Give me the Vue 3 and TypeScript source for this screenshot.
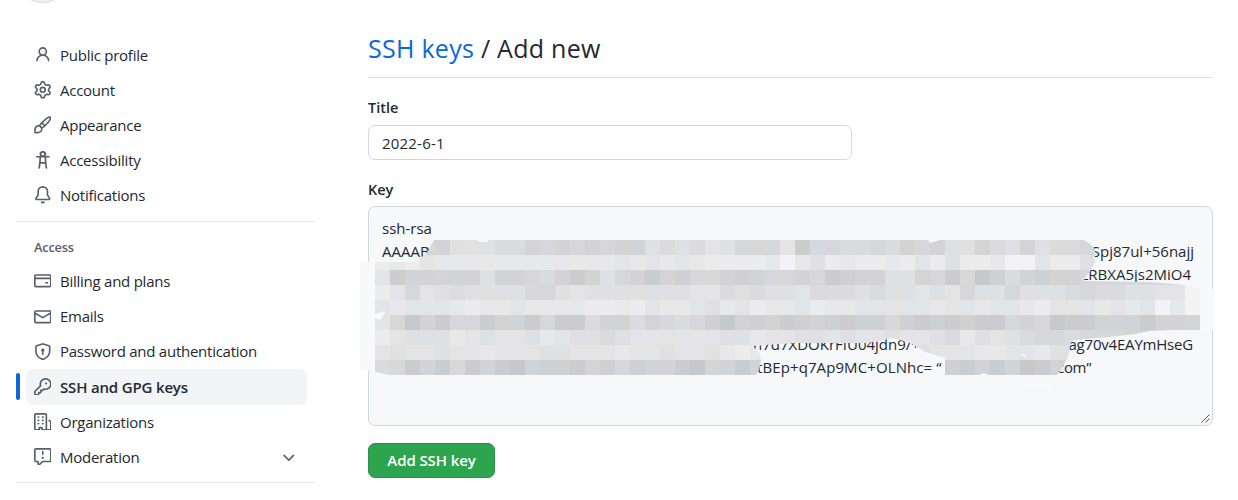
<script setup lang="ts">
interface NavItem {
  label: string
  icon: string
  active?: boolean
  expandable?: boolean
}

const icons: Record<string, string> = {
  person: 'M10.5 5a2.5 2.5 0 11-5 0 2.5 2.5 0 015 0zm.061 3.073a4 4 0 10-5.123 0 6.004 6.004 0 00-3.431 5.142.75.75 0 001.498.07 4.5 4.5 0 018.99 0 .75.75 0 101.498-.07 6.005 6.005 0 00-3.432-5.142z',
  gear: 'M7.429 1.525a6.593 6.593 0 011.142 0c.036.003.108.036.137.146l.289 1.105c.147.56.55.967.997 1.189.174.086.341.183.501.29.417.278.97.423 1.53.27l1.102-.303c.11-.03.175.016.195.046.219.31.41.641.573.989.014.031.022.11-.059.19l-.815.806c-.411.406-.562.957-.53 1.456a4.588 4.588 0 010 .582c-.032.499.119 1.05.53 1.456l.815.806c.08.08.073.159.059.19a6.494 6.494 0 01-.573.99c-.02.029-.086.074-.195.045l-1.103-.303c-.559-.153-1.112-.008-1.529.27-.16.107-.327.204-.5.29-.449.222-.851.628-.998 1.189l-.289 1.105c-.029.11-.101.143-.137.146a6.613 6.613 0 01-1.142 0c-.036-.003-.108-.037-.137-.146l-.289-1.105c-.147-.56-.55-.967-.997-1.189a4.502 4.502 0 01-.501-.29c-.417-.278-.97-.423-1.53-.27l-1.102.303c-.11.03-.175-.016-.195-.046a6.492 6.492 0 01-.573-.989c-.014-.031-.022-.11.059-.19l.815-.806c.411-.406.562-.957.53-1.456a4.587 4.587 0 010-.582c.032-.499-.119-1.05-.53-1.456l-.815-.806c-.08-.08-.073-.159-.059-.19a6.44 6.44 0 01.573-.99c.02-.029.086-.075.195-.045l1.103.303c.559.153 1.112.008 1.529-.27.16-.107.327-.204.5-.29.449-.222.851-.628.998-1.189l.289-1.105c.029-.11.101-.143.137-.146zM8 0c-.236 0-.47.01-.701.03-.743.065-1.29.615-1.458 1.261l-.29 1.106c-.017.066-.078.158-.211.224a5.994 5.994 0 00-.668.386c-.123.082-.233.09-.3.071L3.27 2.776c-.644-.177-1.392.02-1.82.63a7.977 7.977 0 00-.704 1.217c-.315.675-.111 1.422.363 1.891l.815.806c.05.048.098.147.088.294a6.084 6.084 0 000 .772c.01.147-.038.246-.088.294l-.815.806c-.474.469-.678 1.216-.363 1.891.2.428.436.835.704 1.218.428.609 1.176.806 1.82.63l1.103-.303c.066-.019.176-.011.299.071.213.143.436.272.668.386.133.066.194.158.212.224l.289 1.106c.169.646.715 1.196 1.458 1.26a8.094 8.094 0 001.402 0c.743-.064 1.29-.614 1.458-1.26l.29-1.106c.017-.066.078-.158.211-.224a5.98 5.98 0 00.668-.386c.123-.082.233-.09.3-.071l1.102.302c.644.177 1.392-.02 1.82-.63.268-.382.505-.789.704-1.217.315-.675.111-1.422-.364-1.891l-.814-.806c-.05-.048-.098-.147-.088-.294a6.1 6.1 0 000-.772c-.01-.147.039-.246.088-.294l.814-.806c.475-.469.679-1.216.364-1.891a7.992 7.992 0 00-.704-1.218c-.428-.609-1.176-.806-1.82-.63l-1.103.303c-.066.019-.176.011-.299-.071a5.991 5.991 0 00-.668-.386c-.133-.066-.194-.158-.212-.224L10.16 1.29C9.99.645 9.444.095 8.701.031A8.094 8.094 0 008 0zm1.5 8a1.5 1.5 0 11-3 0 1.5 1.5 0 013 0zM11 8a3 3 0 11-6 0 3 3 0 016 0z',
  brush: 'M11.134 1.535C9.722 2.562 8.16 4.057 6.889 5.312 5.8 6.387 5.041 7.401 4.575 8.294a3.745 3.745 0 00-3.227 1.054c-.43.431-.69 1.066-.86 1.657a11.982 11.982 0 00-.358 1.914A21.263 21.263 0 000 15.203v.054l.75-.007-.007.75h.054a14.404 14.404 0 00.654-.012 21.243 21.243 0 001.63-.118c.62-.07 1.3-.18 1.914-.357.592-.17 1.226-.43 1.657-.861a3.745 3.745 0 001.055-3.217c.908-.461 1.942-1.216 3.04-2.3 1.279-1.262 2.764-2.825 3.775-4.249.501-.706.923-1.428 1.125-2.096.2-.659.235-1.469-.368-2.07-.606-.607-1.42-.55-2.069-.34-.66.213-1.376.646-2.076 1.155zm-3.95 8.48a3.76 3.76 0 00-1.19-1.192 9.758 9.758 0 011.161-1.607l1.658 1.658a9.853 9.853 0 01-1.63 1.142zM12.016 2.749c-1.224.89-2.605 2.189-3.822 3.384l1.718 1.718c1.21-1.205 2.51-2.597 3.387-3.833.47-.662.78-1.227.912-1.662.134-.444.032-.551.009-.575h-.001V1.78c-.014-.014-.112-.113-.548.027-.432.14-.995.462-1.655.942zM1.62 13.089a19.56 19.56 0 00-.104 1.395 19.55 19.55 0 001.396-.104 10.528 10.528 0 001.668-.309c.526-.151.856-.325 1.011-.48a2.25 2.25 0 00-3.182-3.182c-.155.155-.329.485-.48 1.01a10.515 10.515 0 00-.309 1.67z',
  accessibility: 'M8 0a2.75 2.75 0 012.35 4.5H13.6a.75.75 0 010 1.5h-2.5l.2 3.4.7 5.8a.75.75 0 01-1.5.2L10 11.5H6l-.5 3.9a.75.75 0 01-1.5-.2l.7-5.8.2-3.4H2.4a.75.75 0 010-1.5h3.25A2.75 2.75 0 018 0zm0 1.5A1.25 1.25 0 108 4a1.25 1.25 0 000-2.5zM6.4 6l-.2 4h3.6l-.2-4z',
  bell: 'M8 16a2 2 0 001.985-1.75c.017-.137-.097-.25-.235-.25h-3.5c-.138 0-.252.113-.235.25A2 2 0 008 16zM8 1.5A3.5 3.5 0 004.5 5v2.947c0 .346-.102.683-.294.97l-1.703 2.556a.018.018 0 00-.003.01l.001.006c0 .002.002.004.004.006a.017.017 0 00.006.004l.007.001h10.964l.007-.001a.016.016 0 00.006-.004.016.016 0 00.004-.006l.001-.007a.017.017 0 00-.003-.01l-1.703-2.554a1.75 1.75 0 01-.294-.97V5A3.5 3.5 0 008 1.5zM3 5a5 5 0 0110 0v2.947c0 .05.015.098.042.139l1.703 2.555A1.518 1.518 0 0113.482 13H2.518a1.518 1.518 0 01-1.263-2.36l1.703-2.554A.25.25 0 003 7.947V5z',
  card: 'M10.75 9a.75.75 0 000 1.5h1.5a.75.75 0 000-1.5h-1.5zM0 3.75C0 2.784.784 2 1.75 2h12.5c.966 0 1.75.784 1.75 1.75v8.5A1.75 1.75 0 0114.25 14H1.75A1.75 1.75 0 010 12.25v-8.5zm14.5 0V5h-13V3.75a.25.25 0 01.25-.25h12.5a.25.25 0 01.25.25zm0 2.75h-13v5.75c0 .138.112.25.25.25h12.5a.25.25 0 00.25-.25V6.5z',
  mail: 'M1.75 2A1.75 1.75 0 000 3.75v8.5C0 13.216.784 14 1.75 14h12.5A1.75 1.75 0 0016 12.25v-8.5A1.75 1.75 0 0014.25 2H1.75zM14.5 4.07v-.32a.25.25 0 00-.25-.25H1.75a.25.25 0 00-.25.25v.32L8 7.88l6.5-3.81zm-13 1.74v6.441c0 .138.112.25.25.25h12.5a.25.25 0 00.25-.25V5.809L8.38 9.397a.75.75 0 01-.76 0L1.5 5.809z',
  shield: 'M7.467.133a1.75 1.75 0 011.066 0l5.25 1.68A1.75 1.75 0 0115 3.48V7c0 1.566-.32 3.182-1.303 4.682-.983 1.498-2.585 2.813-5.032 3.855a1.7 1.7 0 01-1.33 0c-2.447-1.042-4.049-2.357-5.032-3.855C1.32 10.182 1 8.566 1 7V3.48a1.75 1.75 0 011.217-1.667l5.25-1.68zm.61 1.429a.25.25 0 00-.153 0l-5.25 1.68a.25.25 0 00-.174.238V7c0 1.358.275 2.666 1.057 3.86.784 1.194 2.121 2.34 4.366 3.297a.2.2 0 00.154 0c2.245-.956 3.582-2.104 4.366-3.298C13.225 9.666 13.5 8.36 13.5 7V3.48a.25.25 0 00-.174-.237l-5.25-1.68zM9.5 6.5a1.5 1.5 0 01-.75 1.3v2.45a.75.75 0 01-1.5 0V7.8A1.5 1.5 0 119.5 6.5z',
  key: 'M6.5 5.5a4 4 0 112.731 3.795.75.75 0 00-.768.18L7.44 10.5H6.25a.75.75 0 00-.75.75v1.19l-.06.06H4.25a.75.75 0 00-.75.75v1.19l-.06.06H1.75a.25.25 0 01-.25-.25v-1.69l5.024-5.023a.75.75 0 00.181-.768A3.995 3.995 0 016.5 5.5zm4-5.5a5.5 5.5 0 00-5.348 6.788L.22 11.72a.75.75 0 00-.22.53v2C0 15.216.784 16 1.75 16h2a.75.75 0 00.53-.22l.5-.5a.75.75 0 00.22-.53V14h.75a.75.75 0 00.53-.22l.5-.5a.75.75 0 00.22-.53V12h.75a.75.75 0 00.53-.22l.932-.932A5.5 5.5 0 1010.5 0zm.5 6a1 1 0 100-2 1 1 0 000 2z',
  organization: 'M1.5 14.25c0 .138.112.25.25.25H4v-1.25a.75.75 0 01.75-.75h2.5a.75.75 0 01.75.75v1.25h2.25a.25.25 0 00.25-.25V1.75a.25.25 0 00-.25-.25h-8.5a.25.25 0 00-.25.25v12.5zM1.75 16A1.75 1.75 0 010 14.25V1.75C0 .784.784 0 1.75 0h8.5C11.216 0 12 .784 12 1.75v12.5c0 .085-.006.168-.018.25h2.268a.25.25 0 00.25-.25V8.285a.25.25 0 00-.111-.208l-1.055-.703a.75.75 0 11.832-1.248l1.055.703c.487.325.779.871.779 1.456v5.965A1.75 1.75 0 0114.25 16h-3.5a.75.75 0 01-.197-.026c-.099.017-.2.026-.303.026h-3a.75.75 0 01-.75-.75V14h-1v1.25a.75.75 0 01-.75.75h-3zM3.75 3h.5a.75.75 0 010 1.5h-.5a.75.75 0 010-1.5zM3.75 6h.5a.75.75 0 010 1.5h-.5a.75.75 0 010-1.5zM3.75 9h.5a.75.75 0 010 1.5h-.5a.75.75 0 010-1.5zM7.75 3h.5a.75.75 0 010 1.5h-.5a.75.75 0 010-1.5zM7.75 6h.5a.75.75 0 010 1.5h-.5a.75.75 0 010-1.5zM7.75 9h.5a.75.75 0 010 1.5h-.5a.75.75 0 010-1.5z',
  report: 'M0 1.75C0 .784.784 0 1.75 0h12.5C15.216 0 16 .784 16 1.75v9.5A1.75 1.75 0 0114.25 13H8.06l-2.573 2.573A1.457 1.457 0 013 14.543V13H1.75A1.75 1.75 0 010 11.25V1.75zm1.75-.25a.25.25 0 00-.25.25v9.5c0 .138.112.25.25.25h2a.75.75 0 01.75.75v2.19l2.72-2.72a.75.75 0 01.53-.22h6.5a.25.25 0 00.25-.25v-9.5a.25.25 0 00-.25-.25H1.75zM9 9a1 1 0 11-2 0 1 1 0 012 0zm-.25-5.75a.75.75 0 00-1.5 0v2.5a.75.75 0 001.5 0v-2.5z',
}

const general: NavItem[] = [
  { label: 'Public profile', icon: 'person' },
  { label: 'Account', icon: 'gear' },
  { label: 'Appearance', icon: 'brush' },
  { label: 'Accessibility', icon: 'accessibility' },
  { label: 'Notifications', icon: 'bell' },
]

const access: NavItem[] = [
  { label: 'Billing and plans', icon: 'card' },
  { label: 'Emails', icon: 'mail' },
  { label: 'Password and authentication', icon: 'shield' },
  { label: 'SSH and GPG keys', icon: 'key', active: true },
  { label: 'Organizations', icon: 'organization' },
  { label: 'Moderation', icon: 'report', expandable: true },
]

// Redaction mosaic: each cell is a lightness letter (a = lightest) and a tint letter.
const cell = 15
const mosaicRows: string[] = [
  'gn gn gn gn hp en eg eb fb fb hg gp hn gp hb gp hn hb eb fn eb fp dp eb gb gn gv dn jn gv gp fb fb gb fn hn gp hp eb en hg fp ep hg ep fn fn gb',
  'bn cn bn dn cb cb cn cn cb cb cb cb cp cn cn cb db cn dp cp db cn bn bp bp bn cb ap cn eb bp cb bp bn cb bn db bp eb bn bn cn ap ap db bn bn eb',
  'db jg hb hp hg hb hp eb hb hp gn fb hp jn hn eb gn hp jb hw ib gn gg hp ip hb gp gn hp gp jp in hp hp eb en hg gp jp gg kp ib fb hb ib hn hn gb gb gb gp gp gp gp',
  'bn dp gb dp ep fg ep en ep eb gg gp en dn ep eb en en eb ep en dp dn fp en fp en eb db fp fb fn eb fb en eb db eb dn gp eb eb gb ep eb eb fb gb fp fb eb eb dp dn an',
  'dp cp db db db cb bp cn cn db cn cn cn cb bp bp cg bp db cn cn db ep cb dn bp cn cb db bb cn cn db db dn db db cn dn db cn db db cp bp dn dn db cn dp cb db ap cb an',
  'dn gn kv hn jp gp gb jb hn hb jn gb jn jb fp hn hn fb hw gv fb gp ib kb hp ib hn jv in hn ib jp ib ib gw ib jp ib jg in jp jp gb hp gn kg jb jp hp hb hb jn hn hp hg',
  'bn dn eb eb eb cn dn eb dn dn eb cb db ep ep fn eb dp dp dn db dn dp ep eb cp dn dn ep ep db eb db dp en dp db ep fb cn eb dn eb fb gb gb fb gp gb gb hn hp gp gb gb',
  'dn eb dn dn eb dn dp cp dp dp dn eb eb dn dn dn cn dn dn en dp dp en cn bn cb fp fp fp fp fp dn dn db db db en dn dn db cn cn db db cb en eb',
  'fb gg jp hb jb gw jp hb jb kp hb ib in jb hw ib gp ib hp hp jb kb hg hb jb hb kp kp kp kp kp kp kp kp kp kp kp kp ib jb hp jb hb kn jp hb gb',
]

const shades: Record<string, number> = { a: 243, b: 236, c: 232, d: 228, e: 224, f: 219, g: 215, h: 211, i: 208, j: 204, k: 200 }
const tints: Record<string, [number, number, number]> = {
  n: [0, 0, 1],
  b: [-3, 1, 3],
  p: [0, 0, 4],
  v: [-2, 1, 7],
  g: [0, 1, 0],
  w: [2, 0, 0],
}

const cells = mosaicRows.flatMap((row, r) =>
  row.split(' ').map((code, c) => {
    const base = shades[code.charAt(0)] ?? 220
    const tint = tints[code.charAt(1)] ?? [0, 0, 0]
    return {
      key: `${r}-${c}`,
      x: 15 + c * cell,
      y: r * cell,
      fill: `rgb(${tint.map((t) => base + t).join(',')})`,
    }
  }),
)
</script>

<template>
  <div class="page">
    <aside class="sidebar">
      <div class="avatar"></div>
      <nav class="nav">
        <a v-for="item in general" :key="item.label" class="item">
          <svg class="icon" viewBox="0 0 16 16"><path fill-rule="evenodd" :d="icons[item.icon]" /></svg>
          <span class="label">{{ item.label }}</span>
        </a>
        <div class="divider"></div>
        <h3 class="group">Access</h3>
        <a v-for="item in access" :key="item.label" class="item" :class="{ active: item.active }">
          <svg class="icon" viewBox="0 0 16 16"><path fill-rule="evenodd" :d="icons[item.icon]" /></svg>
          <span class="label">{{ item.label }}</span>
          <svg v-if="item.expandable" class="icon chevron" viewBox="0 0 16 16">
            <path d="M12.78 6.22a.75.75 0 010 1.06l-4.25 4.25a.75.75 0 01-1.06 0L3.22 7.28a.75.75 0 011.06-1.06L8 9.94l3.72-3.72a.75.75 0 011.06 0z" />
          </svg>
        </a>
        <div class="divider last"></div>
      </nav>
    </aside>

    <main class="content">
      <h2 class="heading"><a class="link">SSH keys</a> / Add new</h2>
      <label class="field-label">Title</label>
      <div class="input">2022-6-1</div>
      <label class="field-label key-label">Key</label>
      <div class="textarea">
        <div class="line"><span>ssh-rsa</span></div>
        <div class="line"><span>AAAAB</span><span class="end">Spj87ul+56najj</span></div>
        <div class="line"><span class="end short">LRBXA5js2MiO4</span></div>
        <div class="line"></div>
        <div class="line"></div>
        <div class="line"><span class="mid">n7d7XDOKrFIU04jdn9/+c</span><span class="end seg">ag70v4EAYmHseG</span></div>
        <div class="line"><span class="mid tail">tBEp+q7Ap9MC+OLNhc= “</span><span class="com">com”</span></div>
        <svg class="mosaic" width="856" height="150" viewBox="0 0 856 150">
          <defs>
            <clipPath id="smudge">
              <path d="M15 22H55L68 12L71 5L74 0H116L120 2H128V0H568L570 3L580 0H723Q732 3 736 12L735 22L731 30L725 38L724 41L790 42L825 45L855 52V90H812L790 91L775 94L750 97L725 99L711 101L708 117L702 128L697 135H627L624 133L619 135H585V118L565 112L550 103L533 98L520 101L505 103H435L392 106Q401 112 401 120Q400 130 396 135H29L15 132Z" />
            </clipPath>
          </defs>
          <path class="smear" d="M0 22H55V132H15L0 129ZM820 44L855 50V90H800ZM660 130L700 128L690 150H660Z" />
          <g clip-path="url(#smudge)" shape-rendering="crispEdges">
            <rect v-for="c in cells" :key="c.key" :x="c.x" :y="c.y" width="15" height="15" :fill="c.fill" />
          </g>
          <path class="smear" d="M0 69L4 70L0 72ZM10 75L26 71L20 80L13 77ZM620 135L624 133L628 135ZM659 114L666 115L665 117Z" />
        </svg>
        <svg class="grip" width="9" height="9" viewBox="0 0 9 9"><path d="M0.5 8.5L8.5 0.5M4.5 8.5L8.5 4.5" /></svg>
      </div>
      <button class="submit" type="button">Add SSH key</button>
    </main>
  </div>
</template>

<style>
body {
  margin: 0;
  background: #fff;
}
</style>

<style scoped>
.page {
  display: flex;
  width: 1238px;
  height: 500px;
  overflow: hidden;
  background: #fff;
  color: #24292f;
  font: 400 15px/23px 'Open Sans', 'Noto Sans', sans-serif;
}
.sidebar {
  width: 299px;
  margin-left: 16px;
  flex: none;
}
.avatar {
  box-sizing: border-box;
  width: 53px;
  height: 53px;
  margin: -50px 0 34.7px;
  border: 1px solid #d9dadb;
  border-radius: 50%;
  background: #f0f0f0;
}
.item {
  position: relative;
  display: flex;
  align-items: center;
  box-sizing: border-box;
  height: 35.1px;
  margin: 0 8px 0 9.5px;
  padding: 0 9px 0 8px;
  border-radius: 7px;
}
.icon {
  width: 17.6px;
  height: 17.6px;
  flex: none;
  margin-top: -1px;
  fill: #57606a;
}
.label {
  margin-left: 8.9px;
  flex: 1;
  white-space: nowrap;
  letter-spacing: -0.25px;
}
.active {
  background: #f3f4f6;
}
.active .label {
  padding-top: 1px;
  font-weight: 600;
  letter-spacing: -0.17px;
}
.active::before {
  content: '';
  position: absolute;
  left: -9.5px;
  top: 4px;
  width: 4.4px;
  height: 27px;
  border-radius: 5px;
  background: #0969da;
}
.divider {
  height: 1px;
  margin-top: 7.6px;
  background: #e6e9ec;
}
.group {
  margin: 16px 0 7px 18px;
  color: #57606a;
  font-size: 12.8px;
  font-weight: 600;
  line-height: 19.4px;
  letter-spacing: -0.2px;
}
.content {
  width: 845px;
  margin-left: 53px;
  flex: none;
}
.heading {
  height: 48px;
  margin: 29px 0 18px;
  border-bottom: 1px solid #d8dee4;
  font-size: 25px;
  font-weight: 400;
  line-height: 39px;
  letter-spacing: 0.27px;
}
.link {
  color: #0969da;
}
.field-label {
  display: block;
  height: 23px;
  font-size: 14.5px;
  font-weight: 600;
  letter-spacing: 0;
}
.input {
  box-sizing: border-box;
  width: 484px;
  height: 35px;
  margin-top: 6px;
  padding: 0 13px;
  border: 1px solid #d0d7de;
  border-radius: 7px;
  line-height: 35px;
  letter-spacing: 0.2px;
}
.key-label {
  margin: 18px 0 5px;
}
.textarea {
  position: relative;
  box-sizing: border-box;
  height: 220px;
  padding: 10px 18px 0 13px;
  border: 1px solid #d0d7de;
  border-radius: 7px;
  background: #f6f8fa;
}
.line {
  display: flex;
  height: 23.2px;
  white-space: pre;
}
.end {
  margin-left: auto;
}
.short {
  margin-right: 3px;
}
.seg {
  margin-right: 1px;
  letter-spacing: -0.2px;
}
.mid {
  margin-left: 371px;
}
.tail {
  width: 187px;
  margin-left: 375px;
  letter-spacing: 0.1px;
}
.com {
  margin-left: 113px;
  letter-spacing: -0.3px;
}
.mosaic {
  position: absolute;
  left: -9px;
  top: 33px;
}
.smear {
  fill: #f7f9fb;
}
.grip {
  position: absolute;
  right: 2px;
  bottom: 2px;
}
.grip path {
  fill: none;
  stroke: #555;
  stroke-width: 1;
}
.submit {
  display: block;
  box-sizing: border-box;
  width: 127px;
  height: 35px;
  margin-top: 17px;
  padding: 0;
  border: 1px solid #2a9149;
  border-radius: 7px;
  background: #2da44e;
  color: #fff;
  font: 600 15px/33px 'Open Sans', 'Noto Sans', sans-serif;
  letter-spacing: -0.1px;
}
</style>
